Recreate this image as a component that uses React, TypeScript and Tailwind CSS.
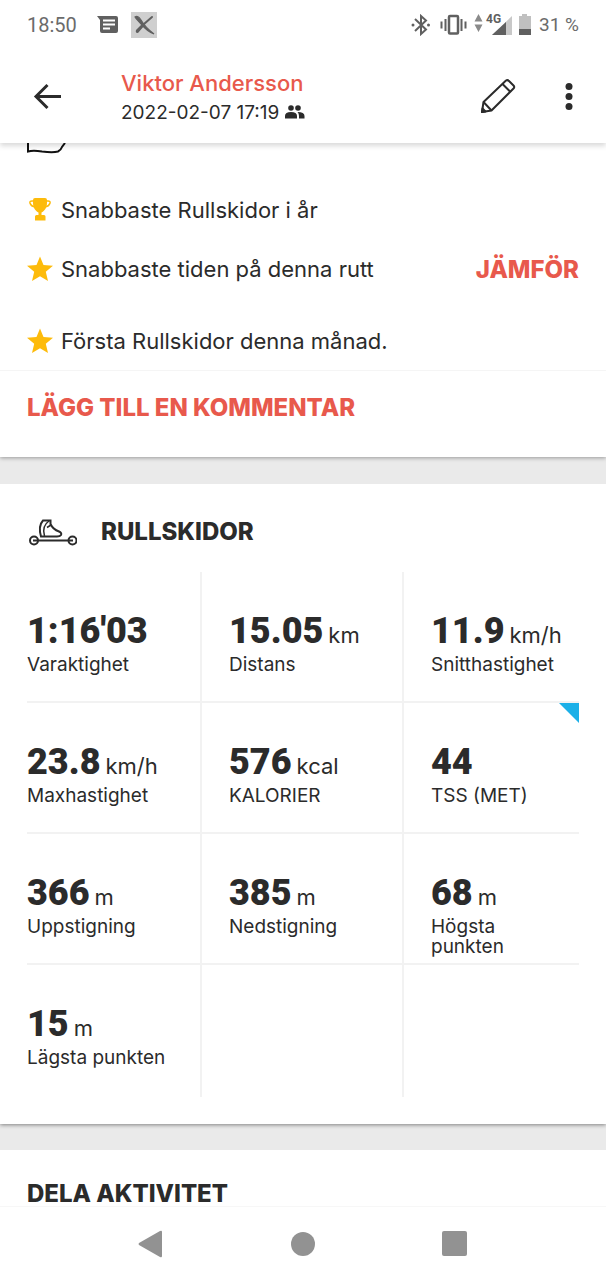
import { clsx } from 'clsx'
import type { ReactNode } from 'react'

type Stat = { value: string; unit?: string; label: string; marked?: boolean }

const STAT_ROWS: (Stat | null)[][] = [
  [
    { value: "1:16'03", label: 'Varaktighet' },
    { value: '15.05', unit: 'km', label: 'Distans' },
    { value: '11.9', unit: 'km/h', label: 'Snitthastighet' },
  ],
  [
    { value: '23.8', unit: 'km/h', label: 'Maxhastighet' },
    { value: '576', unit: 'kcal', label: 'KALORIER' },
    { value: '44', label: 'TSS (MET)', marked: true },
  ],
  [
    { value: '366', unit: 'm', label: 'Uppstigning' },
    { value: '385', unit: 'm', label: 'Nedstigning' },
    { value: '68', unit: 'm', label: 'Högsta punkten' },
  ],
  [{ value: '15', unit: 'm', label: 'Lägsta punkten' }, null, null],
]

function StatusBar() {
  return (
    <section className="flex h-[50px] items-center justify-between px-[27px] font-[Roboto,sans-serif] text-[20px] text-[#6b6b6b]">
      <div className="flex items-center">
        <span>18:50</span>
        <svg className="ml-5 h-[18px] w-[22px]" viewBox="0 0 22 18" aria-hidden="true">
          <path d="M0 0H19Q21 0 21 2V15Q21 17 19 17H5Q3 17 3 15V4Z" fill="#606060" />
          <path d="M6 4.5H18M6 8.5H18M6 12.5H13" stroke="#fff" strokeWidth="1.8" />
        </svg>
        <svg className="ml-3 size-[26px]" viewBox="0 0 26 26" aria-hidden="true">
          <rect width="26" height="26" fill="#cfcfcf" />
          <path d="M4 5Q7 3 10 8Q14 15 23 22Q16 19 11 13Q6 8 4 5Z" fill="#606060" stroke="#606060" strokeWidth="1.2" />
          <path d="M21 5L13 12L6 19.500" fill="none" stroke="#606060" strokeWidth="2" strokeLinecap="round" />
          <path d="M11 12L5 18Q4 21 7 21L13 14Z" fill="#606060" />
        </svg>
      </div>
      <div className="flex items-center">
        <svg className="h-[22px] w-[20px]" viewBox="0 0 20 22" fill="none" aria-hidden="true">
          <path d="M4 5L15 15.500L10 20V2L15 6.500L4 17" stroke="#606060" strokeWidth="2" />
          <circle cx="2" cy="11" r="1.500" fill="#606060" />
          <circle cx="17.500" cy="11" r="1.500" fill="#606060" />
        </svg>
        <svg className="ml-2 h-[22px] w-[30px]" viewBox="0 0 30 22" fill="none" aria-hidden="true">
          <rect x="10" y="2" width="9" height="17.500" rx="1" stroke="#606060" strokeWidth="2.500" />
          <path d="M6.500 5V17M22.500 5V17M2.500 7.500V14.500M26.500 7.500V14.500" stroke="#606060" strokeWidth="2" />
        </svg>
        <svg className="ml-1 h-[30px] w-[60px]" viewBox="0 -4 60 30" aria-hidden="true">
          <path d="M5.500 0L9.500 7.500H1.500ZM1.500 10.500H9.500L5.500 18Z" fill="#8a8a8a" />
          <path d="M39 2V21H19Z" fill="#c8c8c8" />
          <path d="M33 8V21H19Z" fill="#606060" />
          <text x="13" y="9" fontFamily="Roboto, sans-serif" fontSize="12" fontWeight="700" fill="#606060">
            4G
          </text>
          <path d="M46 2H49V0H54V2H58V21H46Z" fill="#c0c0c0" />
          <rect x="46" y="15" width="12" height="6" fill="#606060" />
        </svg>
        <span className="ml-1.5 text-[19px]">31 %</span>
      </div>
    </section>
  )
}

function Header() {
  return (
    <header className="relative z-20 flex h-[93px] items-center bg-white pr-6 pl-[27px] shadow-[0_3px_5px_rgba(0,0,0,0.15)] [clip-path:inset(0_0_-10px_0)]">
      <button type="button" aria-label="Tillbaka" className="w-[94px] pl-1.5">
        <svg className="h-7 w-[30px]" viewBox="0 0 30 28" fill="none" stroke="#2b2b2b" strokeWidth="3">
          <path d="M28 13.500H3M14.500 2L3 13.500L14.500 25" />
        </svg>
      </button>
      <div className="flex-1 pt-1">
        <a href="#profil" className="block text-[22px] leading-7 font-medium text-[#e8594c]">
          Viktor Andersson
        </a>
        <p className="flex items-center gap-1.5 text-[19px] leading-8">
          2022-02-07 17:19
          <svg className="h-[15px] w-5" viewBox="0 0 20 15" fill="#2b2b2b" aria-hidden="true">
            <circle cx="6" cy="3" r="2.800" />
            <path d="M0 13.500V11Q0 7 6 7Q12 7 12 11V13.500Z" />
            <circle cx="13" cy="3" r="2.800" />
            <path d="M12.500 7Q19.500 7 19.500 11V13.500H14V11Q14 8.500 12.500 7Z" />
          </svg>
        </p>
      </div>
      <button type="button" aria-label="Redigera">
        <svg className="size-9" viewBox="0 0 36 36" fill="none" stroke="#2b2b2b" strokeWidth="2" strokeLinejoin="round">
          <path d="M2 33L3.500 23L26 1.500Q27.500 0.500 29 2L33.500 6.500Q35 8 33.500 9.500L11.500 31.500Z" />
          <path d="M3.500 23L11.500 31.500M22.500 5L30.500 13" />
          <path d="M2 33L2.500 29.500L5.500 32.500Z" fill="#2b2b2b" />
        </svg>
      </button>
      <button type="button" aria-label="Fler alternativ" className="ml-10">
        <svg className="h-7 w-[26px]" viewBox="0 0 26 28" fill="#2b2b2b">
          <circle cx="13" cy="3.500" r="3.500" />
          <circle cx="13" cy="13.500" r="3.500" />
          <circle cx="13" cy="23.500" r="3.500" />
        </svg>
      </button>
    </header>
  )
}

function Trophy() {
  return (
    <svg className="size-[26px]" viewBox="0 0 26 26" fill="none" aria-hidden="true">
      <path
        d="M8 1H18Q20 1 20 3V6C20 11 17 14.500 14.500 15.500V18H17Q18.500 18 18.500 19.500V23.500H8V19.500Q8 18 9.500 18H11.500V15.500C9 14.500 6 11 6 6V3Q6 1 8 1Z"
        fill="#fdbb0b"
      />
      <path d="M7 4H5Q2.500 4 3 6Q4 9.500 8.500 10M19 4H21Q23.500 4 23 6Q22 9.500 17.500 10" stroke="#fdbb0b" strokeWidth="1.600" />
    </svg>
  )
}

function Star() {
  return (
    <svg className="size-[26px]" viewBox="0 0 26 26" fill="#fdbb0b" aria-hidden="true">
      <path d="M13 0.500L16.500 9L26 9.800L18.800 15.800L21 25L13 20.200L5 25L7.200 15.800L0 9.800L9.500 9Z" />
    </svg>
  )
}

function Achievement({ icon, className, children }: { icon: ReactNode; className?: string; children: ReactNode }) {
  return (
    <li className={clsx('flex items-center gap-2', className)}>
      {icon}
      {children}
    </li>
  )
}

function RollerSki() {
  return (
    <svg className="h-7 w-[50px]" viewBox="0 0 50 28" fill="none" stroke="#2b2b2b" strokeWidth="2" aria-hidden="true">
      <circle cx="7" cy="22.500" r="4" />
      <circle cx="45.500" cy="22.500" r="4" />
      <path d="M6 22.500H46" />
      <path d="M14 18.500Q11 8 16 2.500H23.500V6Q26 11.500 32 13.500Q35 15 34 17Q33 18.500 30 18.500Z" />
      <path d="M22 3Q14.500 8 17.500 18M24 7L20 9.500" strokeWidth="1.500" />
    </svg>
  )
}

function StatCell({ stat }: { stat: Stat | null }) {
  return (
    <div className="border-r-2 border-[#f2f2f2] pt-10 pl-[27px] last:border-r-0 last:pr-10">
      {stat && (
        <dl className="flex flex-col-reverse">
          <dt className="text-[19px] leading-5">{stat.label}</dt>
          <dd className="text-[22px] leading-[39px] whitespace-nowrap">
            <strong className="font-[Roboto,sans-serif] text-[36px] font-black">{stat.value}</strong>
            {stat.unit && <span className="ml-[5px]">{stat.unit}</span>}
          </dd>
        </dl>
      )}
    </div>
  )
}

function NavBar() {
  return (
    <nav className="flex h-[74px] items-center justify-center gap-[124px] border-t border-[#f7f7f7] bg-white text-[#929292]">
      <button type="button" aria-label="Bakåt">
        <svg className="size-7" viewBox="0 0 28 28" fill="currentColor">
          <path d="M2 13Q1 14 2 15L23 27Q25 28 25 26V2Q25 0 23 1Z" />
        </svg>
      </button>
      <button type="button" aria-label="Hem">
        <svg className="size-7" viewBox="0 0 28 28" fill="currentColor">
          <circle cx="14" cy="14" r="12" />
        </svg>
      </button>
      <button type="button" aria-label="Översikt">
        <svg className="size-7" viewBox="0 0 28 28" fill="currentColor">
          <rect x="1" y="1" width="25" height="25" rx="2" />
        </svg>
      </button>
    </nav>
  )
}

export default function App() {
  return (
    <div className="flex min-h-screen flex-col bg-white font-[Inter,sans-serif] text-[22px] text-[#2b2b2b]">
      <StatusBar />
      <Header />

      <main className="flex flex-1 flex-col bg-[#eaeaea]">
        <section className="relative z-10 bg-white shadow-[0_1px_4px_rgba(0,0,0,0.35)] [clip-path:inset(0_0_-8px_0)]">
          <svg className="ml-[27px] h-[11px] w-10" viewBox="0 0 40 11" fill="none" stroke="#111" strokeWidth="2" aria-hidden="true">
            <path d="M1 0V8.500Q6 7 15 8.500Q26 10 31 8.500Q34 7 35 4L38 0" />
          </svg>
          <ul className="px-[27px] pt-10">
            <Achievement icon={<Trophy />} className="h-8">
              Snabbaste Rullskidor i år
            </Achievement>
            <Achievement icon={<Star />} className="mt-[27px] h-8">
              Snabbaste tiden på denna rutt
              <button type="button" className="ml-auto pt-0.5 text-[24px] font-extrabold text-[#e8594c]">
                JÄMFÖR
              </button>
            </Achievement>
            <Achievement icon={<Star />} className="mt-10 h-8">
              Första Rullskidor denna månad.
            </Achievement>
          </ul>
          <div className="mt-[13px] flex h-[87px] border-t border-[#f5f5f5] px-[27px] pb-3">
            <button type="button" className="text-[24px] font-extrabold text-[#e8594c]">
              LÄGG TILL EN KOMMENTAR
            </button>
          </div>
        </section>

        <section className="relative z-10 mt-[27px] bg-white pb-[27px] shadow-[0_1px_4px_rgba(0,0,0,0.45)] [clip-path:inset(0_0_-8px_0)]">
          <h2 className="flex h-[88px] items-center gap-6 pt-2 pl-[27px] text-[24px] font-extrabold">
            <RollerSki />
            RULLSKIDOR
          </h2>
          {STAT_ROWS.map((row, i) => (
            <div key={i} className="relative mx-[27px] border-b-2 border-[#f2f2f2] last:border-b-0">
              <div
                className={clsx('-mx-[27px] grid grid-cols-3', i < STAT_ROWS.length - 1 ? 'min-h-[129px]' : 'min-h-[132px]')}
              >
                {row.map((stat, j) => (
                  <StatCell key={j} stat={stat} />
                ))}
              </div>
              {row.some((stat) => stat?.marked) && (
                <svg className="absolute top-0 right-0 size-5" viewBox="0 0 20 20" aria-hidden="true">
                  <path d="M0 0H20V20Z" fill="#1cb0e8" />
                </svg>
              )}
            </div>
          ))}
        </section>

        <section className="mt-[26px] flex-1 bg-white px-[27px] pt-8">
          <h2 className="text-[24px] leading-6 font-extrabold">DELA AKTIVITET</h2>
        </section>
      </main>

      <NavBar />
    </div>
  )
}
